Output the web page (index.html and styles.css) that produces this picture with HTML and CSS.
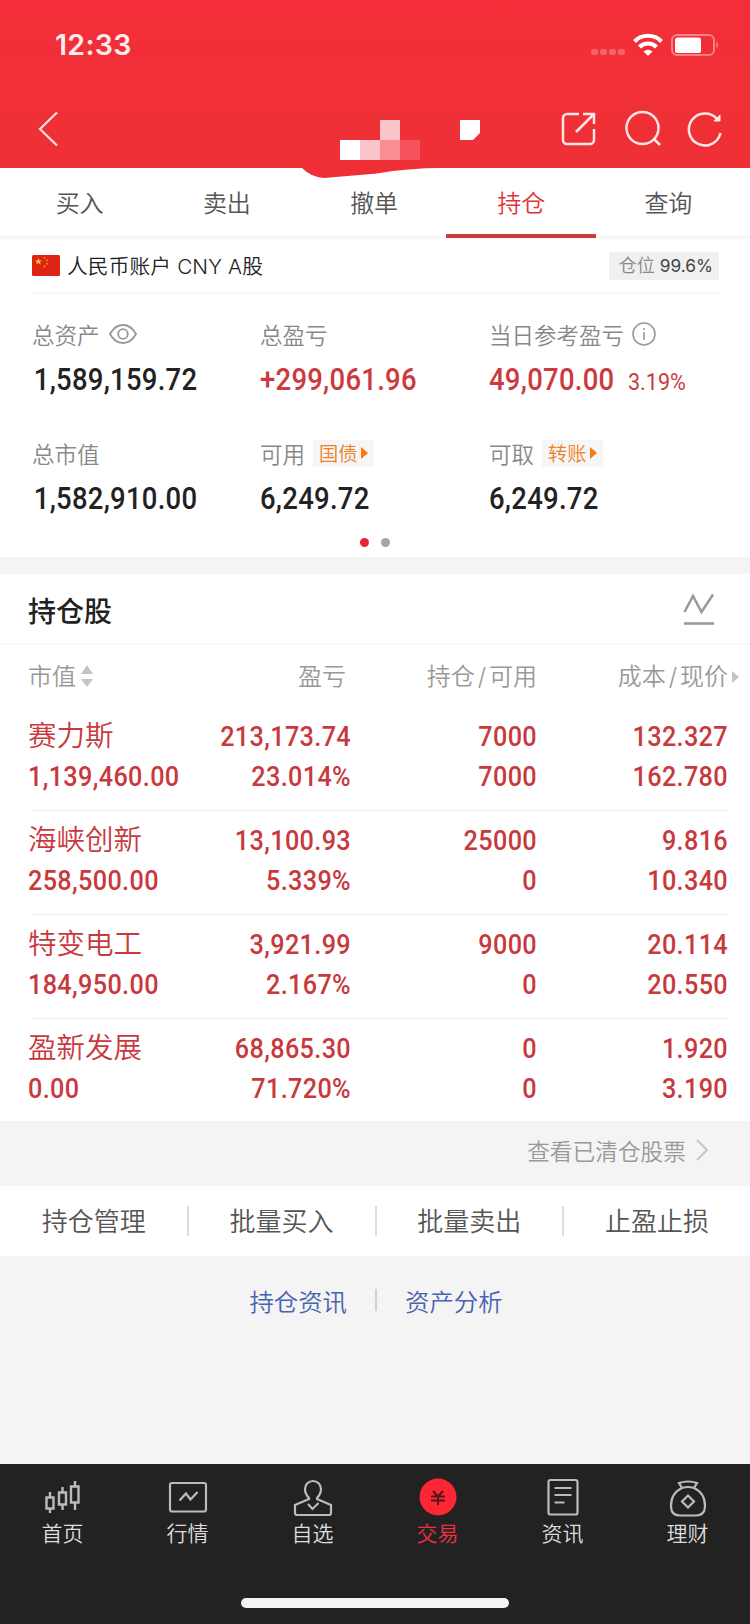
FILE: index.html
```html
<!DOCTYPE html>
<html lang="zh-CN">
<head>
  <meta charset="UTF-8" />
  <meta name="viewport" content="width=device-width, initial-scale=1.0"/>
  <title>持仓</title>
  <link rel="stylesheet" href="styles.css">
</head>
<body>
  <header class="header">
    <div class="status-bar">
      <span class="time">12:33</span>
      <svg class="status-icons" width="130" height="24" viewBox="0 0 130 24">
        <g fill="#fff" fill-opacity=".25">
          <rect x="1" y="16" width="7" height="6" rx="2"/>
          <rect x="10" y="16" width="7" height="6" rx="2"/>
          <rect x="19" y="16" width="7" height="6" rx="2"/>
          <rect x="28" y="16" width="7" height="6" rx="2"/>
        </g>
        <g fill="none" stroke="#fff" stroke-width="4">
          <path d="M44.500 8.500a19 19 0 0 1 27 0"/>
          <path d="M49.500 14a12 12 0 0 1 17 0"/>
        </g>
        <path d="M53.500 18.500a6.500 6.500 0 0 1 9 0l-4.500 4.500z" fill="#fff"/>
        <rect x="82" y="2" width="42" height="20" rx="5" fill="none" stroke="#fff" stroke-opacity=".4" stroke-width="2"/>
        <rect x="85" y="4.500" width="26" height="15.500" rx="2.500" fill="#fff"/>
        <path d="M126.500 8.500q3 3.500 0 7z" fill="#fff" fill-opacity=".5"/>
      </svg>
    </div>
    <div class="nav-bar">
      <svg width="22" height="36" viewBox="0 0 22 36"><path d="M20 1.500L3 18l17 16.500" fill="none" stroke="#fff" stroke-opacity=".85" stroke-width="2.200"/></svg>
      <svg class="masked-title" width="146" height="62" viewBox="0 0 146 62">
        <path d="M0 49h140q-34 0-65 5.500L28 58.500Q12 61 0 49z" fill="#ee3036"/>
        <rect x="38" y="21" width="20" height="20" fill="#fff"/>
        <rect x="58" y="21" width="20" height="20" fill="#fac6cb"/>
        <rect x="78" y="21" width="20" height="20" fill="#f98d94"/>
        <rect x="98" y="21" width="20" height="20" fill="#f4535b"/>
        <rect x="78" y="1" width="20" height="20" fill="#fac6cb"/>
      </svg>
      <i class="masked-block"></i>
      <div class="actions">
        <svg width="36" height="36" viewBox="0 0 36 36" fill="none" stroke="#ffe5e3" stroke-width="2.500">
          <path d="M18 3H6a4 4 0 0 0-4 4v22a4 4 0 0 0 4 4h23a4 4 0 0 0 4-4V18M15 21L33 3M22 3h11v10"/>
        </svg>
        <svg width="38" height="36" viewBox="0 0 38 36" fill="none" stroke="#ffe5e3" stroke-width="2.500">
          <circle cx="19.500" cy="17" r="16"/><path d="M30.500 27.500l6.500 6.500"/>
        </svg>
        <svg width="36" height="36" viewBox="0 0 36 36" fill="none" stroke="#ffe5e3" stroke-width="2.500">
          <path d="M33.500 22a16 16 0 1 1-3.500-14"/><path d="M33 4v6h-6z" fill="#ffe5e3" stroke-width="1"/>
        </svg>
      </div>
    </div>
  </header>

  <nav class="tabs">
    <a>买入</a>
    <a>卖出</a>
    <a>撤单</a>
    <a class="active">持仓</a>
    <a>查询</a>
  </nav>

  <section class="account">
    <div class="account-head">
      <svg width="28" height="21" viewBox="0 0 28 21">
        <rect width="28" height="21" rx="1.500" fill="#dd2312"/>
        <path d="M6.500 3l.9 2.400H10L8 7l.8 2.600-2.300-1.600-2.300 1.600L5 7 3 5.400h2.600z" fill="#fc3"/>
        <g fill="#f9a51a"><circle cx="12.500" cy="2.800" r=".9"/><circle cx="15" cy="5.400" r=".9"/><circle cx="15" cy="8.800" r=".9"/><circle cx="12.500" cy="11.500" r=".9"/></g>
      </svg>
      <span class="account-name">人民币账户 CNY A股</span>
      <span class="position">仓位 <b>99.6%</b></span>
    </div>
    <div class="stats">
      <div class="stat">
        <div class="label">总资产
          <svg class="eye" width="28" height="20" viewBox="0 0 28 20" fill="none" stroke="#999" stroke-width="1.800"><path d="M1 10Q6 1 14 1t13 9q-5 9-13 9T1 10z"/><circle cx="14" cy="10" r="4.800"/></svg>
        </div>
        <div class="value first">1,589,159.72</div>
      </div>
      <div class="stat">
        <div class="label">总盈亏</div>
        <div class="value red">+299,061.96</div>
      </div>
      <div class="stat">
        <div class="label">当日参考盈亏
          <svg class="info" width="24" height="24" viewBox="0 0 24 24" fill="none" stroke="#999" stroke-width="1.600"><circle cx="12" cy="12" r="11"/><path d="M12 10v8M12 6v2"/></svg>
        </div>
        <div class="value red">49,070.00<small>3.19%</small></div>
      </div>
      <div class="stat">
        <div class="label">总市值</div>
        <div class="value first">1,582,910.00</div>
      </div>
      <div class="stat">
        <div class="label">可用 <span class="tag">国债<i></i></span></div>
        <div class="value">6,249.72</div>
      </div>
      <div class="stat">
        <div class="label">可取 <span class="tag">转账<i></i></span></div>
        <div class="value">6,249.72</div>
      </div>
    </div>
    <div class="dots"><i class="on"></i><i></i></div>
  </section>

  <section class="holdings">
    <div class="holdings-title">
      <h2>持仓股</h2>
      <svg width="32" height="34" viewBox="0 0 32 34" fill="none" stroke="#999"><path d="M1.500 20L10 4l8.500 16L30 2.500" stroke-width="2.500"/><path d="M1 31.500h30" stroke-width="2.600"/></svg>
    </div>
    <div class="row table-head">
      <span>市值<svg class="sort" width="12" height="22" viewBox="0 0 12 22"><path d="M6 0l6 9H0zM6 22l6-8H0z" fill="#c4c4c4"/></svg></span>
      <span class="profit">盈亏</span>
      <span>持仓<em>/</em>可用</span>
      <span>成本<em>/</em>现价</span>
      <i class="more"></i>
    </div>
    <div class="row stock">
      <div><strong>赛力斯</strong><p>1,139,460.00</p></div>
      <div><p>213,173.74</p><p>23.014%</p></div>
      <div><p>7000</p><p>7000</p></div>
      <div><p>132.327</p><p>162.780</p></div>
    </div>
    <div class="row stock">
      <div><strong>海峡创新</strong><p>258,500.00</p></div>
      <div><p>13,100.93</p><p>5.339%</p></div>
      <div><p>25000</p><p>0</p></div>
      <div><p>9.816</p><p>10.340</p></div>
    </div>
    <div class="row stock">
      <div><strong>特变电工</strong><p>184,950.00</p></div>
      <div><p>3,921.99</p><p>2.167%</p></div>
      <div><p>9000</p><p>0</p></div>
      <div><p>20.114</p><p>20.550</p></div>
    </div>
    <div class="row stock">
      <div><strong>盈新发展</strong><p>0.00</p></div>
      <div><p>68,865.30</p><p>71.720%</p></div>
      <div><p>0</p><p>0</p></div>
      <div><p>1.920</p><p>3.190</p></div>
    </div>
  </section>

  <div class="cleared">查看已清仓股票
    <svg width="14" height="22" viewBox="0 0 14 22"><path d="M2 1l10 10L2 21" fill="none" stroke="#c4c4c4" stroke-width="2"/></svg>
  </div>

  <div class="batch">
    <a>持仓管理</a>
    <a>批量买入</a>
    <a>批量卖出</a>
    <a>止盈止损</a>
  </div>

  <div class="links"><a>持仓资讯</a><i></i><a>资产分析</a></div>

  <footer class="footer">
    <div class="tab-bar">
      <a>
        <svg width="40" height="40" viewBox="0 0 40 40" fill="none" stroke="#bbb" stroke-width="2.400"><path d="M3.500 18.500h7v11h-7zM16 13.500h7v12h-7zM28 7.500h7.500v16H28zM7 13v5.500M7 29.500v4.500M19.500 8v5.500M19.500 25.500V31M32 2v5.500M32 23.500V31"/></svg>
        首页
      </a>
      <a>
        <svg width="40" height="40" viewBox="0 0 40 40" fill="none" stroke="#bbb" stroke-width="2.200"><rect x="2" y="4" width="36" height="28.500" rx="2"/><path d="M11.500 21.500l6.500-7 4.500 6 7-7.500"/></svg>
        行情
      </a>
      <a>
        <svg width="40" height="40" viewBox="0 0 40 40" fill="none" stroke="#bbb" stroke-width="2.200"><path d="M16 19c-4-4-4-7-4-9a8 8 0 0 1 16 0c0 2 0 5-4 9v1l14 6v8a2 2 0 0 1-2 2H4a2 2 0 0 1-2-2v-8l14-6z"/><path d="M15 25l4.500 5 6-6"/></svg>
        自选
      </a>
      <a class="active">
        <svg width="40" height="40" viewBox="0 0 40 40"><circle cx="20" cy="18" r="18.500" fill="#fd2635"/><path d="M15 12l5 5.500 5-5.500M13 17.500h14M13 21.500h14M20 17v9" fill="none" stroke="#5a1519" stroke-width="2"/></svg>
        交易
      </a>
      <a>
        <svg width="40" height="40" viewBox="0 0 40 40" fill="none" stroke="#bbb" stroke-width="2.200"><rect x="5.500" y="1" width="29" height="34.500" rx="2"/><path d="M11.500 9h17M11.500 16h17M11.500 23.500h10"/></svg>
        资讯
      </a>
      <a>
        <svg width="40" height="40" viewBox="0 0 40 40" fill="none" stroke="#bbb" stroke-width="2.200"><path d="M14 9l-3-5q9-3 18 0l-3 5q11 5 11 18 0 9.500-9 9.500H12q-9 0-9-9.500Q3 14 14 9zq6-2 12 0"/><path d="M20 16.500l6 6-6 6-6-6z"/></svg>
        理财
      </a>
    </div>
    <div class="home-indicator"></div>
  </footer>
</body>
</html>
```
FILE: styles.css
```css
* {
  box-sizing: border-box;
}
body {
  margin: 0;
  width: 750px;
  height: 1624px;
  display: flex;
  flex-direction: column;
  background: #f4f4f4;
  font-family: Inter, "Noto Sans CJK SC", sans-serif;
  font-weight: 350;
  color: #222;
  overflow: hidden;
}
svg {
  display: block;
  flex: none;
  overflow: visible;
}
p, h2 {
  margin: 0;
}

/* header */
.header {
  height: 168px;
  background: linear-gradient(#f32e38, #ee3036);
}
.status-bar {
  height: 90px;
  padding: 0 30px 0 55px;
  display: flex;
  align-items: center;
  justify-content: space-between;
}
.time {
  padding-bottom: 1px;
  font-size: 28.5px;
  font-weight: 600;
  letter-spacing: 0.3px;
  color: #ffecec;
}
.nav-bar {
  position: relative;
  height: 78px;
  padding: 0 27px 0 37px;
  display: flex;
  align-items: center;
  justify-content: space-between;
}
.masked-title {
  position: absolute;
  left: 302px;
  top: 29px;
}
.masked-block {
  position: absolute;
  left: 460px;
  top: 30px;
  width: 20px;
  height: 20px;
  background: #fff;
  clip-path: polygon(0 0, 100% 0, 100% 65%, 65% 100%, 0 100%);
}
.actions {
  display: flex;
  gap: 26px;
}

/* tabs */
.tabs {
  height: 71px;
  padding: 0 8px 0 6px;
  display: flex;
  background: #fff;
  border-bottom: 3px solid #f6f6f6;
}
.tabs a {
  flex: 1;
  text-align: center;
  font-size: 24px;
  line-height: 72px;
  color: #555;
}
.tabs .active {
  flex: 0 0 150px;
  color: #e0323a;
  margin: 0 -1.5px;
  height: 70px;
  border-bottom: 4px solid #d0393e;
}

/* account */
.account {
  height: 318px;
  background: #fff;
}
.account-head {
  height: 55px;
  margin: 0 30px 0 32px;
  display: flex;
  align-items: center;
  border-bottom: 2px solid #f7f7f7;
}
.account-name {
  margin-left: 7px;
  padding-bottom: 1px;
  font-size: 20.7px;
  letter-spacing: 0.15px;
}
.position {
  margin-right: 1px;
  margin-left: auto;
  height: 28px;
  padding: 0 6px 0 10px;
  background: #f0f0f0;
  font-size: 18px;
  line-height: 28px;
  color: #888;
}
.position b {
  font-size: 17.3px;
  font-weight: 400;
  color: #444;
}
.stats {
  display: grid;
  grid-template-columns: 228px 229px 1fr;
  padding: 22px 0 0 32px;
}
.stat {
  height: 119px;
}
.label {
  height: 36px;
  display: flex;
  align-items: center;
  gap: 8px;
  font-size: 22.5px;
  color: #888;
}
.eye {
  margin-left: 1px;
}
.tag {
  display: flex;
  align-items: center;
  height: 27px;
  padding: 0 6px;
  background: #f6f6f6;
  font-size: 19.3px;
  color: #ee8124;
}
.tag i {
  margin-left: 3px;
  border: 6px solid transparent;
  border-left: 7px solid #f57a10;
  border-right: 0;
}
/* digits are squeezed to get the narrow DIN look */
.value {
  height: 52px;
  padding-top: 2px;
  font-family: Roboto, sans-serif;
  font-size: 30.5px;
  font-weight: 500;
  line-height: 52px;
  letter-spacing: 0.3px;
  white-space: nowrap;
  transform: scaleX(0.9);
  transform-origin: left;
}
.first {
  padding-left: 2px;
}
.value small {
  margin-left: 15px;
  font-size: 24px;
  font-weight: 400;
  letter-spacing: 0;
}
.red {
  color: #cc3a40;
}
.dots {
  display: flex;
  justify-content: center;
  gap: 12px;
  margin-top: -16px;
}
.dots i {
  width: 9px;
  height: 9px;
  border-radius: 50%;
  background: #a5a5a5;
}
.dots .on {
  background: #e8253a;
}

/* holdings */
.holdings {
  height: 547px;
  margin-top: 17px;
  background: #fff;
}
.holdings-title {
  height: 71px;
  padding: 0 35px 0 28px;
  display: flex;
  align-items: center;
  justify-content: space-between;
  border-bottom: 2px solid #f8f8f8;
}
h2 {
  font-size: 28px;
  font-weight: 500;
  padding-top: 2px;
}
.row {
  display: grid;
  grid-template-columns: 161px 162px 186px 191px;
  margin-left: 28px;
  width: 700px;
  text-align: right;
}
.row > :first-child {
  text-align: left;
}
.table-head {
  position: relative;
  height: 62px;
  font-size: 24px;
  line-height: 63px;
  color: #999;
}
.table-head em {
  font-style: normal;
  padding: 0 3px;
}
.profit {
  padding-right: 5px;
}
.sort {
  display: inline-block;
  margin-left: 5px;
  vertical-align: -2px;
}
.more {
  position: absolute;
  right: -11px;
  top: 26px;
  border: 6px solid transparent;
  border-left: 7px solid #c4c4c4;
  border-right: 0;
}
.stock {
  height: 104px;
  padding-top: 9px;
  color: #c8393e;
  background: linear-gradient(#ebebeb, #ebebeb) 4px 100% / 696px 1px no-repeat;
}
.stock:last-child {
  background: none;
}
.stock p,
.stock strong {
  display: block;
  height: 40px;
  line-height: 40px;
  white-space: nowrap;
}
.stock strong {
  font-size: 28.5px;
  font-weight: 350;
}
.stock p {
  font-family: Roboto, sans-serif;
  font-size: 28px;
  font-weight: 500;
  line-height: 42px;
  letter-spacing: 0.4px;
  transform: scaleX(0.9);
  transform-origin: right;
}
.stock > :first-child p {
  transform-origin: left;
}

/* actions under the list */
.cleared {
  height: 65px;
  padding: 0 41px 7px 0;
  display: flex;
  align-items: center;
  justify-content: flex-end;
  gap: 9px;
  font-size: 22.7px;
  color: #999;
}
.batch {
  height: 70px;
  padding-left: 1px;
  display: flex;
  align-items: center;
  background: #fff;
}
.batch a {
  flex: 1;
  text-align: center;
  font-size: 26px;
  line-height: 29px;
  padding-top: 1px;
  color: #555;
}
.batch a + a {
  border-left: 2px solid #ddd;
}
.links {
  height: 90px;
  padding: 0 0 2px 2px;
  display: flex;
  align-items: center;
  justify-content: center;
  gap: 28px;
  font-size: 24.4px;
  color: #4863b0;
}
.links i {
  width: 2px;
  height: 22px;
  background: #d0d0d0;
}

/* bottom bar */
.footer {
  height: 160px;
  margin-top: auto;
  background: #222;
}
.tab-bar {
  height: 134px;
  padding-top: 15px;
  display: flex;
}
.tab-bar a {
  flex: 1;
  display: flex;
  flex-direction: column;
  align-items: center;
  font-size: 21px;
  line-height: 30px;
  color: #ddd;
}
.tab-bar .active {
  color: #ee3142;
}
.home-indicator {
  width: 268px;
  height: 10px;
  margin: 0 auto;
  border-radius: 5px;
  background: #f4f4f4;
}
```
